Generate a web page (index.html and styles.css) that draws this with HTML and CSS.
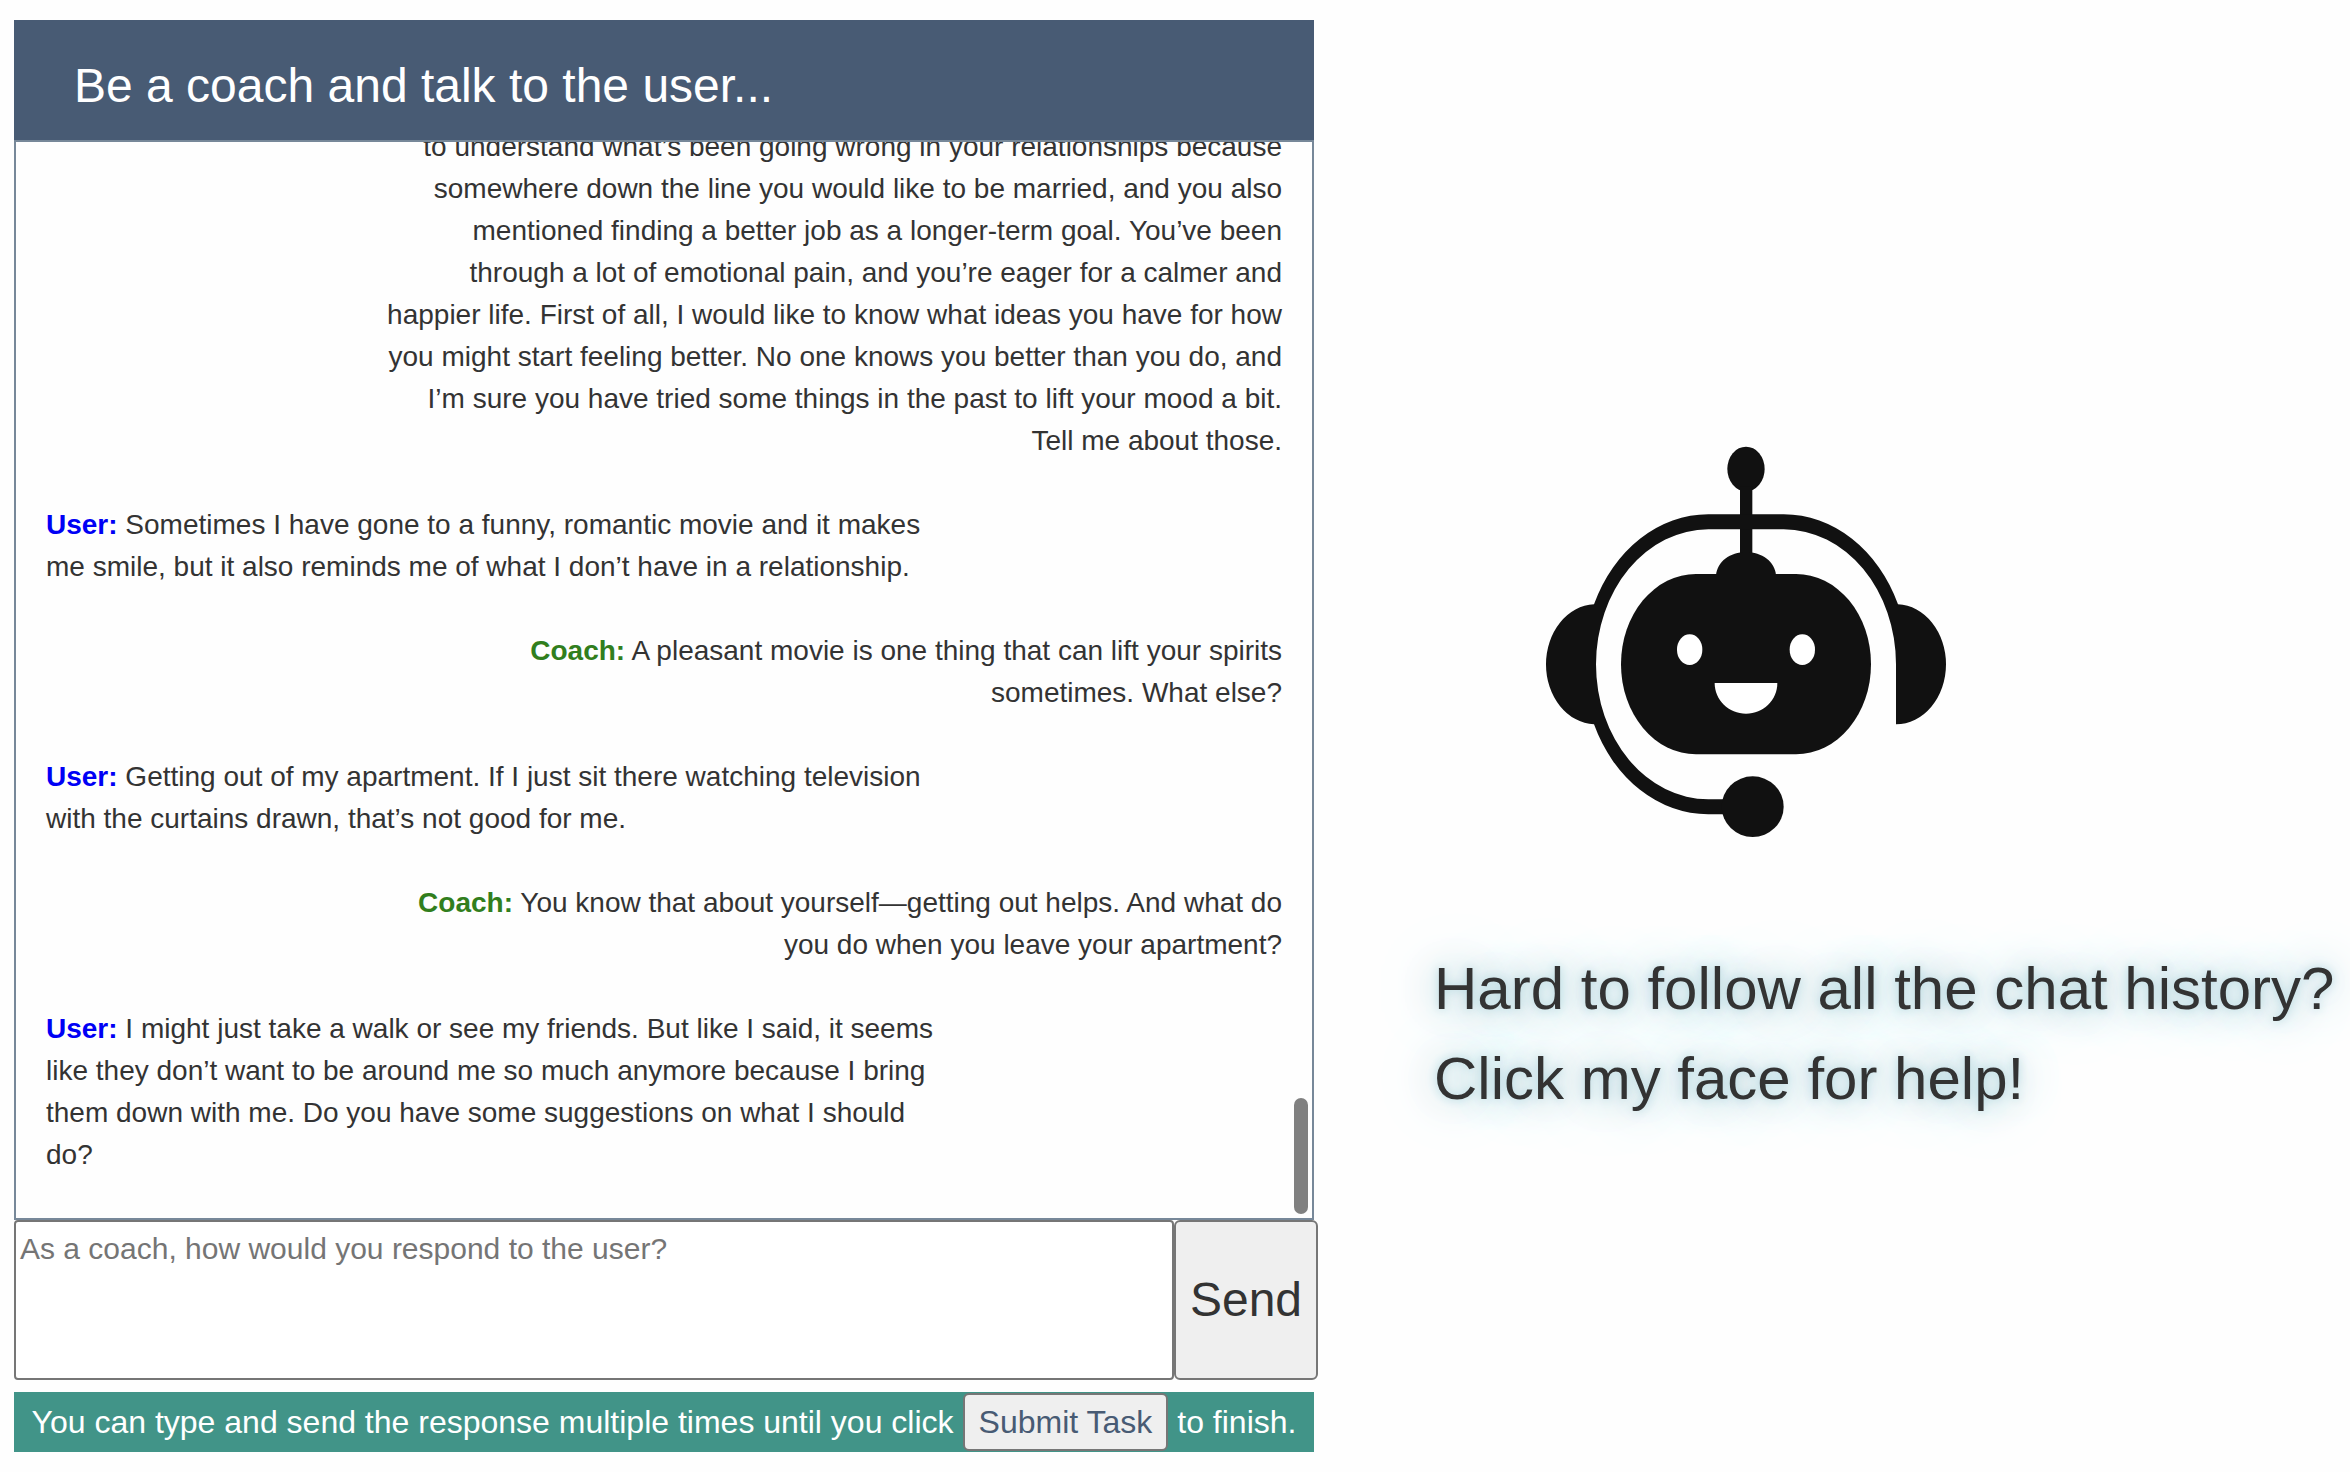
FILE: index.html
```html
<!DOCTYPE html>
<html lang="en">
<head>
<meta charset="utf-8">
<title>Coach chat</title>
<link rel="stylesheet" href="styles.css">
</head>
<body>
<main class="page">
  <section class="chat">
    <header class="chat-header"><h1 class="chat-title">Be a coach and talk to the user...</h1></header>
    <div class="history">
      <p class="message coach">to understand what’s been going wrong in your relationships because somewhere down the line you would like to be married, and you also mentioned finding a better job as a longer-term goal. You’ve been through a lot of emotional pain, and you’re eager for a calmer and happier life. First of all, I would like to know what ideas you have for how you might start feeling better. No one knows you better than you do, and I’m sure you have tried some things in the past to lift your mood a bit. Tell me about those.</p>
      <p class="message user"><b class="speaker">User:</b> Sometimes I have gone to a funny, romantic movie and it makes me smile, but it also reminds me of what I don’t have in a relationship.</p>
      <p class="message coach"><b class="speaker">Coach:</b> A pleasant movie is one thing that can lift your spirits sometimes. What else?</p>
      <p class="message user"><b class="speaker">User:</b> Getting out of my apartment. If I just sit there watching television with the curtains drawn, that’s not good for me.</p>
      <p class="message coach"><b class="speaker">Coach:</b> You know that about yourself—getting out helps. And what do you do when you leave your apartment?</p>
      <p class="message user"><b class="speaker">User:</b> I might just take a walk or see my friends. But like I said, it seems like they don’t want to be around me so much anymore because I bring them down with me. Do you have some suggestions on what I should do?</p>
      <div class="scroll-thumb"></div>
    </div>
    <form class="composer">
      <textarea class="reply" aria-label="Your response" placeholder="As a coach, how would you respond to the user?"></textarea>
      <button class="send" type="button">Send</button>
    </form>
    <div class="finish">
      <span>You can type and send the response multiple times until you click</span>
      <button class="submit" type="button">Submit Task</button>
      <span>to finish.</span>
    </div>
  </section>
  <aside class="helper">
    <button class="robot" type="button" aria-label="Get help">
      <svg class="robot-face" viewBox="0 0 1350 1320" fill="#111">
        <ellipse cx="678" cy="147" rx="56" ry="67"/>
        <rect x="660" y="200" width="37" height="210"/>
        <path d="M588 465C592 425 630 396 678 396S764 425 768 465Z"/>
        <rect x="303" y="462" width="750" height="541" rx="225" ry="270"/>
        <path d="M222 553A374 450 0 0 1 565 283H791A374 450 0 0 1 1134 553A150 180 0 0 1 1278 733A150 180 0 0 1 1128 913V733A337 405 0 0 0 791 328H565A337 405 0 0 0 228 733A337 405 0 0 0 565 1138H620V1183H565A374 450 0 0 1 222 913A150 180 0 0 1 78 733A150 180 0 0 1 222 553Z"/>
        <ellipse cx="698" cy="1160" rx="93" ry="91"/>
        <g fill="#fff">
          <ellipse cx="509" cy="689" rx="38" ry="46"/>
          <ellipse cx="847" cy="689" rx="38" ry="46"/>
          <path d="M584 789H772C772 840 730 881 678 881S584 840 584 789Z"/>
        </g>
      </svg>
    </button>
    <p class="hint">Hard to follow all the chat history?<br>Click my face for help!</p>
  </aside>
</main>
</body>
</html>
```
FILE: styles.css
```css
* {
  box-sizing: border-box;
}

body {
  margin: 0;
  background: #fefefe;
  color: #333;
  font-family: "Liberation Sans", Arial, sans-serif;
  font-size: 28px;
  line-height: 42px;
}

h1,
p {
  margin: 0;
}

button,
textarea {
  margin: 0;
  font-family: inherit;
}

.page {
  display: grid;
  grid-template-columns: 1300fr 916fr;
  column-gap: 120px;
  padding: 20px 0 20px 14px;
}

.chat-header {
  padding: 30px 60px 18px;
  background: #485b74;
}

.chat-title {
  color: #fff;
  font-size: 48px;
  font-weight: 400;
  line-height: 72px;
}

.history {
  position: relative;
  display: flex;
  flex-direction: column;
  justify-content: flex-end;
  gap: 42px;
  height: 1080px;
  padding: 0 30px 42px;
  overflow: hidden;
  border: 2px solid #789;
}

.message {
  flex: none;
  width: 73%;
}

.coach {
  align-self: flex-end;
  text-align: right;
}

.user .speaker {
  color: #0000f5;
}

.coach .speaker {
  color: #317e1d;
}

.scroll-thumb {
  position: absolute;
  right: 4px;
  bottom: 4px;
  width: 14px;
  height: 116px;
  border-radius: 7px;
  background: #808080;
}

.composer {
  display: flex;
  height: 160px;
  margin-right: -4px;
}

.reply {
  flex: 1;
  padding: 4px;
  border: 2px solid #767676;
  border-radius: 4px;
  background: #fff;
  font-size: 30px;
  line-height: 46px;
  resize: none;
}

.reply::placeholder {
  color: #757575;
}

.send {
  width: 144px;
  padding: 0 0 2px;
  border: 2px solid #767676;
  border-radius: 6px;
  background: #efefef;
  color: #333;
  font-size: 48px;
}

.finish {
  display: flex;
  align-items: center;
  justify-content: center;
  gap: 9px;
  height: 60px;
  margin-top: 12px;
  background: #419488;
  color: #fff;
  font-size: 32px;
  white-space: nowrap;
}

.submit {
  height: 58px;
  padding: 0 14px;
  border: 2px solid #767676;
  border-radius: 6px;
  background: #efefef;
  color: #485b74;
  font-size: 32px;
}

.helper {
  padding-top: 400px;
}

.robot {
  display: block;
  width: 450px;
  margin-left: 86px;
  padding: 0;
  border: 0;
  background: none;
}

.robot-face {
  display: block;
  width: 100%;
}

.hint {
  margin-top: 84px;
  font-size: 60px;
  line-height: 90px;
  text-shadow: 0 0 10px #b4d8e0, 0 0 40px #8fb9c6, 0 0 80px #b8dde0;
  white-space: nowrap;
}
```
